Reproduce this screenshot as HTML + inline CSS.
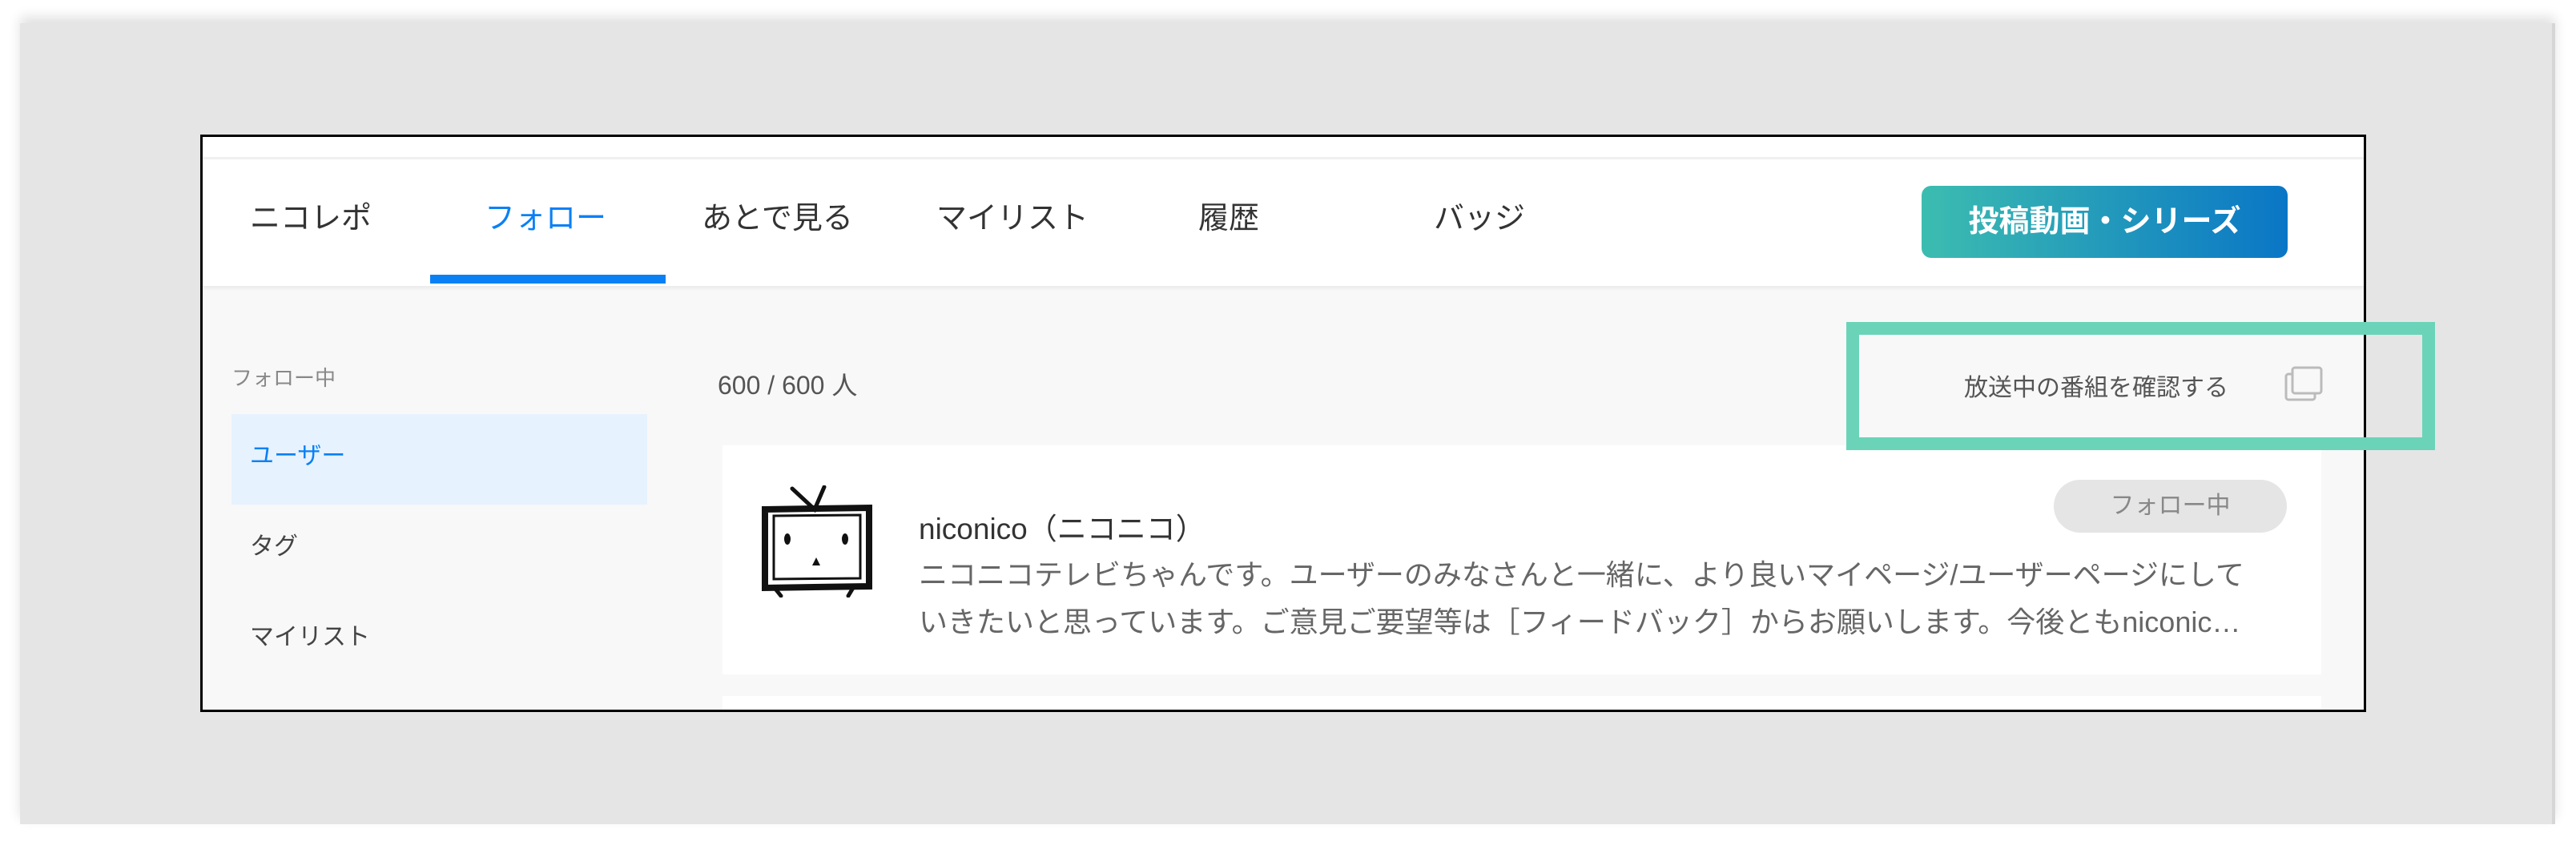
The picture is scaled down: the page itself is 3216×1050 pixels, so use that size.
<!DOCTYPE html>
<html><head><meta charset="utf-8"><style>
*{margin:0;padding:0;box-sizing:border-box}
body{width:3216px;height:1050px;background:#fff;position:relative;overflow:hidden;font-family:"Liberation Sans","Noto Sans CJK JP",sans-serif;}
.abs{position:absolute;white-space:nowrap}
#bg{left:25px;top:29px;width:3165px;height:1000px;background:#e5e5e5;border-right:4px solid #d6d6d6;box-shadow:0 -8px 14px rgba(0,0,0,.12)}
#frame{left:250px;top:168px;width:2704px;height:721px;border:3px solid #000;background:#f8f8f8;overflow:hidden}
#nav{left:0;top:0;width:100%;height:186px;background:#fff;box-shadow:0 3px 4px rgba(0,0,0,.06)}
#navline{left:0;top:25px;width:100%;height:3px;background:#f0f0f0}
.n{top:246px;font-size:38px;color:#333;line-height:54px}
.sb{font-size:30px;color:#444;line-height:40px}
</style></head><body>
<div class="abs" id="bg"></div>
<div class="abs" id="frame">
  <div class="abs" id="nav"><div class="abs" id="navline"></div>
    <div class="abs" style="left:284px;top:172px;width:294px;height:11px;background:#0a80f5"></div>
    <div class="abs" style="left:2146px;top:61px;width:457px;height:90px;border-radius:12px;background:linear-gradient(90deg,#3cbdb0,#0a76c6);color:#fff;font-weight:bold;font-size:38px;line-height:90px;text-align:center">投稿動画・シリーズ</div>
  </div>
</div>
<div class="abs n" style="left:312px">ニコレポ</div>
<div class="abs n" style="left:605px;color:#0a80f5">フォロー</div>
<div class="abs n" style="left:876px">あとで見る</div>
<div class="abs n" style="left:1169px">マイリスト</div>
<div class="abs n" style="left:1496px">履歴</div>
<div class="abs n" style="left:1790px">バッジ</div>

<div class="abs" style="left:289px;top:452px;font-size:26px;color:#888">フォロー中</div>
<div class="abs" style="left:289px;top:517px;width:519px;height:113px;background:#e6f2fe"></div>
<div class="abs sb" style="left:312px;top:550px;color:#0a80f5">ユーザー</div>
<div class="abs sb" style="left:312px;top:663px">タグ</div>
<div class="abs sb" style="left:312px;top:776px">マイリスト</div>

<div class="abs" style="left:896px;top:456px;font-size:32px;color:#555">600 / 600 人</div>
<div class="abs" style="left:2452px;top:459px;font-size:30px;color:#555">放送中の番組を確認する</div>
<svg class="abs" style="left:2850px;top:455px" width="52" height="48" viewBox="0 0 52 48"><rect x="4" y="12" width="36" height="32" rx="3" fill="none" stroke="#bbb" stroke-width="3"/><rect x="12" y="4" width="36" height="32" rx="3" fill="#f8f8f8" stroke="#bbb" stroke-width="3"/></svg>

<div class="abs" style="left:902px;top:556px;width:1996px;height:286px;background:#fff"></div>
<div class="abs" style="left:902px;top:869px;width:1996px;height:17px;background:#fff"></div>
<svg class="abs" style="left:947px;top:606px" width="146" height="140" viewBox="0 0 146 140">
<g stroke="#111" fill="none" stroke-linecap="round">
<path d="M42 4 L70 30 L82 2" stroke-width="5"/>
<path d="M8 30 L138 28 L138 126 L8 128 Z" stroke-width="8"/>
<path d="M19 38 L127 37 L127 116 L19 117 Z" stroke-width="3"/>
<path d="M20 128 L28 138 M118 128 L112 138" stroke-width="5"/>
</g>
<ellipse cx="36" cy="67" rx="4" ry="7" fill="#111"/><ellipse cx="108" cy="67" rx="4" ry="7" fill="#111"/>
<path d="M67 100 L72 90 L77 100 Z" fill="#111"/>
</svg>
<div class="abs" style="left:1147px;top:630px;font-size:37px;color:#333">niconico（ニコニコ）</div>
<div class="abs" style="left:1147px;top:688px;font-size:36px;color:#666;width:1680px;overflow:hidden;text-overflow:ellipsis;line-height:59px;white-space:normal;height:118px">ニコニコテレビちゃんです。ユーザーのみなさんと一緒に、より良いマイページ/ユーザーページにしていきたいと思っています。ご意見ご要望等は［フィードバック］からお願いします。今後ともniconic…</div>
<div class="abs" style="left:2564px;top:599px;width:291px;height:66px;border-radius:33px;background:#e5e5e5;color:#888;font-size:30px;line-height:66px;text-align:center">フォロー中</div>

<div class="abs" style="left:2305px;top:402px;width:735px;height:160px;border:16px solid #6bd4b8"></div>
</body></html>
